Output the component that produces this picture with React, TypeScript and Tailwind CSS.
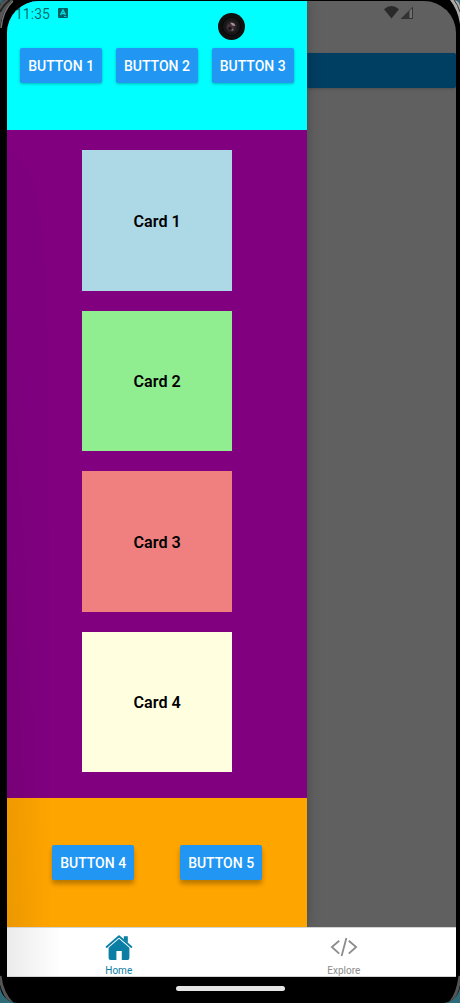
const cards = [
  { label: 'Card 1', color: 'bg-[#add8e6]' },
  { label: 'Card 2', color: 'bg-[#90ee90]' },
  { label: 'Card 3', color: 'bg-[#f08080]' },
  { label: 'Card 4', color: 'bg-[#ffffe0]' },
];

function Button({ label, raised = false }: { label: string; raised?: boolean }) {
  return (
    <button
      className={`flex h-[35px] w-[82.3px] items-center justify-center rounded-[2px] bg-[#2196f3] pt-[2px] text-[14px] font-medium whitespace-nowrap text-white ${
        raised ? 'shadow-[0_4px_5px_rgba(0,0,0,0.28)]' : 'shadow-[0_1px_3px_rgba(0,0,0,0.28)]'
      }`}
    >
      {label}
    </button>
  );
}

function Drawer() {
  return (
    <aside className="relative flex w-[300.4px] shrink-0 flex-col shadow-[0_0_12px_rgba(0,0,0,0.25)]">
      <header className="flex h-[129.4px] items-start gap-[13.5px] bg-[#00ffff] pt-[47px] pl-[13px]">
        <Button label="BUTTON 1" />
        <Button label="BUTTON 2" />
        <Button label="BUTTON 3" />
      </header>
      <main className="flex h-[667.6px] flex-col items-center gap-[19.8px] bg-[#800080] pt-[20px]">
        {cards.map((card) => (
          <div
            key={card.label}
            className={`flex h-[140.6px] w-[150px] shrink-0 items-center justify-center pt-[3px] text-[16.2px] font-semibold text-black ${card.color}`}
          >
            {card.label}
          </div>
        ))}
      </main>
      <footer className="flex h-[129px] items-start gap-[45.7px] bg-[#ffa500] pt-[47px] pl-[45px]">
        <Button label="BUTTON 4" raised />
        <Button label="BUTTON 5" raised />
      </footer>
    </aside>
  );
}

function StatusBar() {
  return (
    <div className="absolute top-0 left-0 h-7 w-full">
      <span className="absolute top-[3px] left-[8px] text-[14px] leading-[20px] text-black/60">11:35</span>
      <svg className="absolute top-[7px] left-[51px]" width="10" height="10" viewBox="0 0 10 10">
        <rect width="10" height="10" rx="1" fill="#005f63" />
        <path d="M2.5 7 L5 2 L7.5 7 M3.5 5.5 H6.5" fill="none" stroke="#00dfe2" strokeWidth="1.3" />
        <path d="M6 8.5 H8.5" stroke="#00dfe2" strokeWidth="0.8" />
      </svg>
      <svg className="absolute top-[5px] left-[376px]" width="32" height="14" viewBox="0 0 32 14">
        <path d="M1 3.2 Q8.5 -3 16 3.2 L8.5 12.6 Z" fill="#292929" />
        <path d="M17.5 13 L30 .5 V13 Z" fill="#333" />
        <path d="M26.5 4.7 L29 2.5 V12 H26.5 Z" fill="#707070" />
      </svg>
      <svg className="absolute top-[12px] left-[211px]" width="27" height="27" viewBox="0 0 27 27">
        <circle cx="13.5" cy="13.5" r="13.5" fill="#101010" />
        <circle cx="13.5" cy="13.5" r="9" fill="#181818" stroke="#080808" />
        <circle cx="13.5" cy="13.5" r="5.5" fill="#2b2427" />
        <circle cx="12.5" cy="14.3" r="3.6" fill="#45333b" />
        <path d="M12 9.8 Q16.5 9 17.4 13 L14.5 12.5 Z" fill="#b4929e" />
        <circle cx="12" cy="15.5" r="1.8" fill="#171719" />
        <circle cx="14.5" cy="16.7" r="1" fill="#7b7275" />
      </svg>
    </div>
  );
}

function TabBar() {
  return (
    <nav className="relative grid h-[50px] grid-cols-2 border-y border-[#d4d4d4] bg-white bg-linear-to-r from-[#ebebeb] to-white to-[12%] text-[10px] leading-[12px]">
      <div className="flex flex-col items-center pt-[6px] pr-px text-[#0a7ea4]">
        <svg width="28" height="28" viewBox="0 0 28 28">
          <path d="M1.6 13 L14 2.2 L26.4 13" fill="none" stroke="currentColor" strokeWidth="1.8" strokeLinecap="round" strokeLinejoin="round" />
          <path d="M18.8 2.2 H22.8 V9 L18.8 5.6 Z" fill="currentColor" />
          <path d="M3.6 13.8 L14 4.8 L24.4 13.8 V24 Q24.4 26 22.4 26 H16.8 V17 H11.4 V26 H5.6 Q3.6 26 3.6 24 Z" fill="currentColor" />
        </svg>
        <span className="mt-[3px]">Home</span>
      </div>
      <div className="flex flex-col items-center pt-[6px] text-[#8c8c8c]">
        <svg width="28" height="28" viewBox="0 0 28 28" fill="none" stroke="currentColor" strokeWidth="1.8">
          <path d="M9.2 6.8 L1.9 13 L9.2 19.6 M18.8 6.8 L26.1 13 L18.8 19.6 M16.4 4 L11.6 22" />
        </svg>
        <span className="mt-[3px]">Explore</span>
      </div>
    </nav>
  );
}

export default function App() {
  return (
    <div className="h-[1003px] w-[460px] overflow-hidden bg-[#2e6a78] font-['Roboto',sans-serif]">
      <div className="relative h-full overflow-hidden rounded-t-[6px] rounded-b-[18px] bg-black px-[7px] pt-px">
        <svg className="absolute inset-0" width="460" height="1003" viewBox="0 0 460 1003" fill="none">
          <path d="M0 0 H13 Q2 10 0 28 Z" fill="#555" />
          <path d="M0 12 Q4 4 10 0" stroke="#222" strokeWidth="2" />
          <path d="M1 28 Q3 10 13 1" stroke="#777" strokeWidth="1.5" />
          <path d="M450 0 H460 V24 Q458 10 450 0 Z" fill="#aaa" />
          <path d="M454 0 Q458 5 460 12" stroke="#333" />
          <path d="M0 976 Q2 994 12 1003 M460 976 Q458 994 450 1003" stroke="#555" strokeWidth="3" />
        </svg>
        <div className="relative w-[449px] overflow-hidden rounded-t-[32px] bg-[#606060]">
          <div className="flex h-[926px]">
            <Drawer />
            <div className="flex-1 pt-[52px]">
              <div className="h-[35px] rounded-r-[2px] bg-[#003e62] shadow-[0_1px_3px_rgba(0,0,0,0.2)]" />
            </div>
          </div>
          <div className="absolute top-[130px] left-0 h-[796px] w-[44px] bg-linear-to-r from-black/8 to-transparent mask-t-from-0%" />
          <StatusBar />
          <TabBar />
        </div>
        <div className="mx-auto mt-[9px] h-[5px] w-[109px] rounded-full bg-[#e5e5e5]" />
      </div>
    </div>
  );
}
